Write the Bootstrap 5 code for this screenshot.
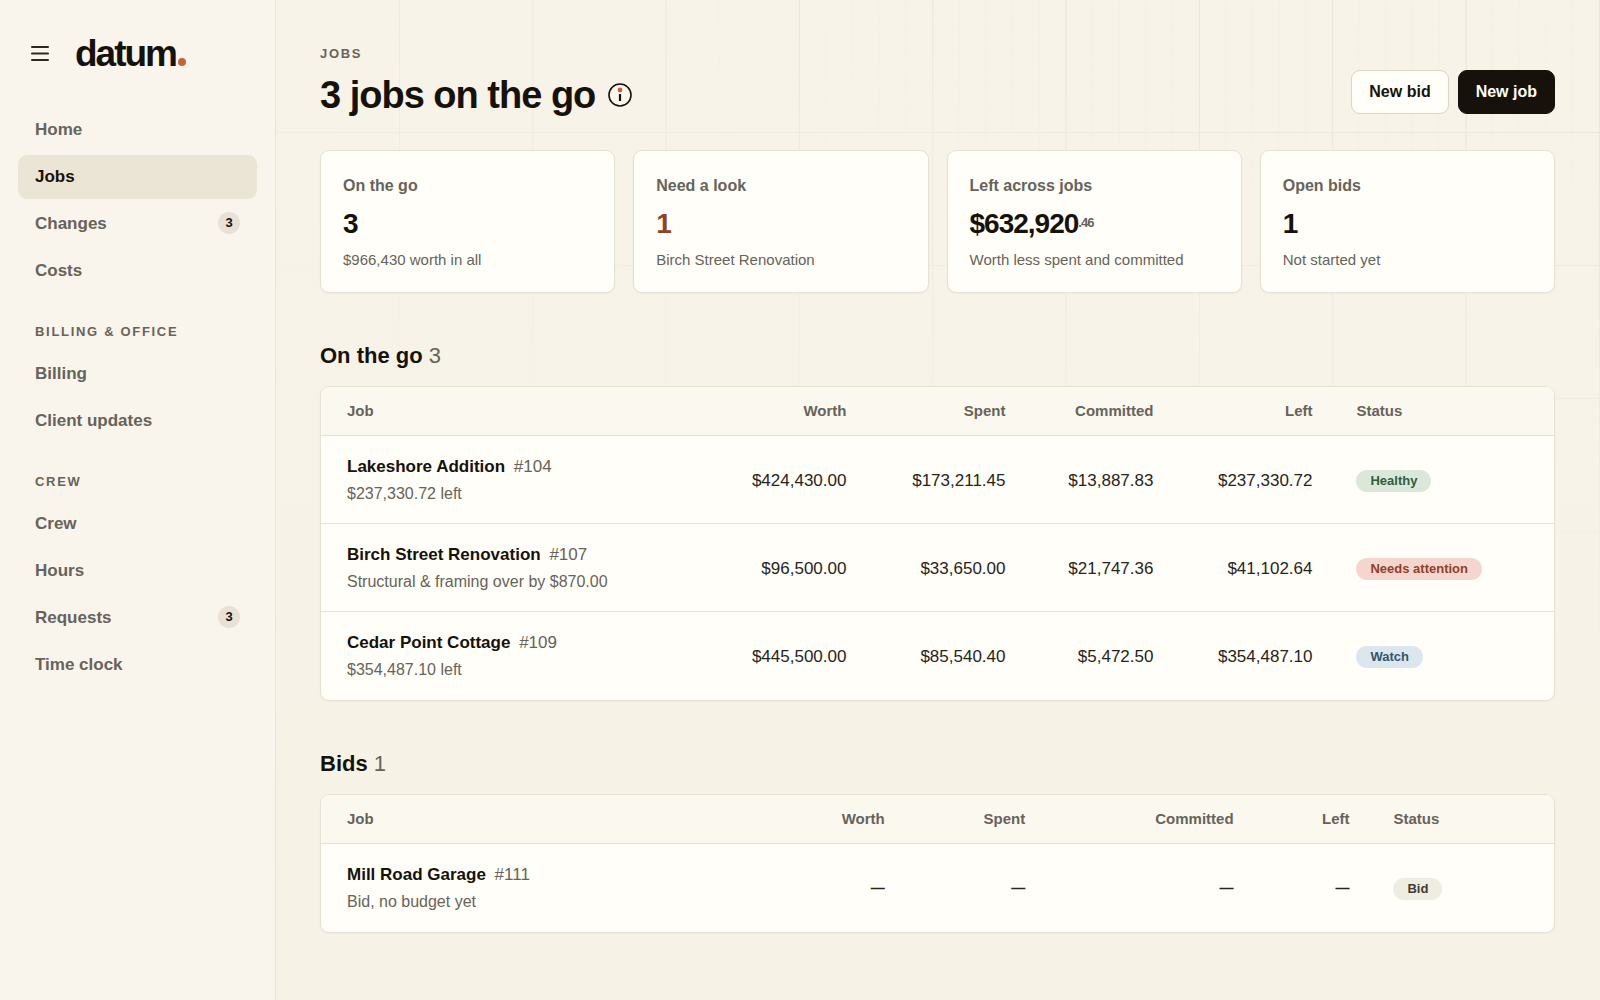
<!DOCTYPE html>
<html lang="en">
<head>
<meta charset="utf-8">
<meta name="viewport" content="width=device-width, initial-scale=1">
<title>Jobs – datum</title>
<link href="https://cdn.jsdelivr.net/npm/bootstrap@5.3.0/dist/css/bootstrap.min.css" rel="stylesheet">
<style>
  :root {
    --ink: #16120b;
    --soft: #67635a;
    --rule: #e7e1d3;
    --paper: #fffef8;
    --rust: #c4623c;
  }
  body {
    font-family: "Liberation Sans", Arial, sans-serif;
    background: #f7f3e9;
    color: var(--ink);
    font-size: 17px;
  }
  .shell { min-height: 100vh; }

  /* Sidebar */
  .sidebar {
    width: 276px;
    background: #f9f5ed;
    border-right: 1px solid #e9e4d7;
    padding: 35px 18px 24px;
  }
  .brand-row { margin-bottom: 35px; }
  .menu-btn { width: 44px; height: 36px; border: 0; background: none; padding: 0 0 0 12px; text-align: left; }
  .menu-btn svg { display: block; }
  .wordmark { font-size: 37px; line-height: 38px; font-weight: 700; letter-spacing: -2px; color: var(--ink); text-decoration: none; margin-left: 13px; }
  .wordmark:hover { color: var(--ink); }
  .wordmark-dot { width: 8px; height: 8px; border-radius: 50%; background: var(--rust); margin: 0 0 7px 2px; }
  .side-nav { gap: 3px; }
  .side-nav .nav-link {
    height: 44px; padding: 0 17px; border-radius: 9px;
    color: var(--soft); font-weight: 700;
  }
  .side-nav .nav-link.active { background: #ebe5d6; color: var(--ink); }
  .tally {
    min-width: 22px; height: 22px; border-radius: 11px; background: #e9e1d5;
    color: var(--ink); font-size: 13px; line-height: 22px; text-align: center; font-weight: 700;
    margin-bottom: 2px;
  }
  .caps { font-size: 13px; line-height: 20px; letter-spacing: .13em; font-weight: 700; color: var(--soft); text-transform: uppercase; margin: 0 0 7px; }
  .side-nav + .caps { padding: 0 17px; margin: 29px 0 10px; white-space: nowrap; }

  /* Main */
  .board { position: relative; padding: 44px 45px 60px 44px; min-width: 0; background: linear-gradient(#f7f3e9, #f6f2e6); }
  .drafting {
    position: absolute; top: 0; right: 0; bottom: 0; left: -276px; pointer-events: none;
    background-image:
      linear-gradient(90deg, transparent calc(100% - 1px), #eae6db 0),
      linear-gradient(transparent calc(100% - 1px), #ece8dd 0);
    background-size: calc(100% / 12) 133px;
    -webkit-mask-image: linear-gradient(195deg, #000 10%, rgba(0,0,0,.6) 30%, transparent 48%);
    mask-image: linear-gradient(195deg, #000 10%, rgba(0,0,0,.6) 30%, transparent 48%);
    clip-path: inset(0 0 0 276px);
  }
  .drafting-fine {
    background-image:
      linear-gradient(90deg, transparent calc(100% - 1px), #f3efe5 0),
      linear-gradient(transparent calc(100% - 1px), #f5f1e7 0);
    background-size: calc(100% / 60) 27px;
    -webkit-mask-image: radial-gradient(ellipse 40% 26% at 78% 0, #000 30%, transparent);
    mask-image: radial-gradient(ellipse 40% 26% at 78% 0, #000 30%, transparent);
  }
  .layer { position: relative; }
  .page-title { font-size: 38px; line-height: 48px; font-weight: 700; letter-spacing: -1px; margin: 0; }
  .title-line { gap: 13px; }
  .info-btn { border: 0; background: none; padding: 0; width: 24px; height: 24px; }
  .info-btn svg { display: block; }
  .btn-datum {
    height: 44px; padding: 0 17px; font-size: 16px; font-weight: 700; border-radius: 9px;
    --bs-btn-border-color: #ddd4c6; --bs-btn-bg: var(--paper); --bs-btn-color: var(--ink);
    --bs-btn-hover-bg: #faf6ec; --bs-btn-hover-border-color: #d3cabb;
  }
  .btn-datum-dark {
    --bs-btn-border-color: var(--ink); --bs-btn-bg: var(--ink); --bs-btn-color: #fffef8;
    --bs-btn-hover-bg: #2d2820; --bs-btn-hover-color: #fffef8;
  }
  .title-bar { margin-bottom: 31px; }
  .title-actions { gap: 9px; margin-bottom: 5px; }

  .stats { --bs-gutter-x: 18px; --bs-gutter-y: 18px; }
  .stat {
    background: var(--paper); border: 1px solid var(--rule); border-radius: 9px;
    padding: 24px 22px 21px; box-shadow: 0 1px 2px rgba(80,60,20,.04);
  }
  .stat-name { font-size: 16px; line-height: 22px; font-weight: 700; color: var(--soft); margin: 0; }
  .stat-figure { font-size: 28px; line-height: 32px; font-weight: 700; letter-spacing: -1px; margin: 11px 0 9px; }
  .stat-figure.alerting { color: #8c4427; }
  .cents { font-size: 13px; color: var(--soft); line-height: 0; vertical-align: 6px; }
  .stat-note { font-size: 15px; line-height: 22px; color: var(--soft); margin: 0; }

  .section-title { font-size: 22px; line-height: 30px; font-weight: 700; margin: 48px 0 15px; }
  .section-title span { font-weight: 400; color: var(--soft); }

  .sheet { background: var(--paper); border: 1px solid var(--rule); border-radius: 9px; overflow: hidden; box-shadow: 0 1px 2px rgba(80,60,20,.04); }
  .sheet table { table-layout: fixed; margin: 0; --bs-table-bg: transparent; min-width: 900px; }
  .sheet th, .sheet td { border-bottom: 1px solid var(--rule); }
  .sheet thead th { background: #fbf8f0; color: var(--soft); font-size: 15px; line-height: 22px; padding: 13px 22px; }
  .sheet tbody td, .sheet tbody th { padding: 17px 22px 16px; color: #27241e; line-height: 27px; font-weight: 400; }
  .sheet tr > :first-child { padding-left: 26px; }
  .sheet tbody tr:last-child > * { border-bottom: 0; padding-bottom: 17px; }
  .job-link { color: var(--ink); font-weight: 700; text-decoration: none; margin-right: 4px; }
  .quiet { color: var(--soft); }
  .job-note { font-size: 16px; line-height: 27px; color: var(--soft); }
  .sheet .blank { font-size: 14px; font-weight: 700; }
  .pill { display: inline-block; font-size: 13px; line-height: 22px; font-weight: 700; border-radius: 11px; padding: 0 14px; vertical-align: middle; }
  .pill-ok { background: #dbe8d9; color: #2f5d43; }
  .pill-bad { background: #f4d6cf; color: #913f28; }
  .pill-watch { background: #dbe6ef; color: #33556f; }
  .pill-bid { background: #efece1; color: #3f3b32; }
</style>
<script src="https://cdn.jsdelivr.net/npm/bootstrap@5.3.0/dist/js/bootstrap.bundle.min.js" defer></script>
</head>
<body>
<div class="shell d-flex">

  <aside class="sidebar flex-shrink-0">
    <div class="brand-row d-flex align-items-center">
      <button class="menu-btn" type="button" aria-label="Toggle menu">
        <svg width="20" height="16" viewBox="0 0 20 16" fill="none" stroke="#2c2820" stroke-width="2" stroke-linecap="round"><path d="M2 1h16M2 7.5h16M2 14h16"/></svg>
      </button>
      <a class="wordmark d-flex align-items-end" href="#"><span>datum</span><span class="wordmark-dot"></span></a>
    </div>

    <nav class="side-nav nav flex-column" aria-label="Main">
      <a class="nav-link d-flex align-items-center" href="#">Home</a>
      <a class="nav-link d-flex align-items-center active" aria-current="page" href="#">Jobs</a>
      <a class="nav-link d-flex align-items-center justify-content-between" href="#">Changes <span class="tally">3</span></a>
      <a class="nav-link d-flex align-items-center" href="#">Costs</a>
    </nav>
    <h2 class="caps">Billing &amp; office</h2>
    <nav class="side-nav nav flex-column" aria-label="Billing and office">
      <a class="nav-link d-flex align-items-center" href="#">Billing</a>
      <a class="nav-link d-flex align-items-center" href="#">Client updates</a>
    </nav>
    <h2 class="caps">Crew</h2>
    <nav class="side-nav nav flex-column" aria-label="Crew">
      <a class="nav-link d-flex align-items-center" href="#">Crew</a>
      <a class="nav-link d-flex align-items-center" href="#">Hours</a>
      <a class="nav-link d-flex align-items-center justify-content-between" href="#">Requests <span class="tally">3</span></a>
      <a class="nav-link d-flex align-items-center" href="#">Time clock</a>
    </nav>
  </aside>

  <main class="board flex-grow-1">
    <div class="drafting drafting-fine"></div>
    <div class="drafting"></div>
    <div class="layer">
      <header class="title-bar d-flex flex-wrap justify-content-between align-items-end">
        <div>
          <p class="caps">Jobs</p>
          <div class="title-line d-flex align-items-center">
            <h1 class="page-title">3 jobs on the go</h1>
            <button class="info-btn" type="button" aria-label="About this page">
              <svg width="24" height="24" viewBox="0 0 24 24"><circle cx="12" cy="12" r="11" fill="#fbf8ef" stroke="#16120b" stroke-width="1.6"/><circle cx="12" cy="7" r="2.4" fill="#cf5b45"/><path d="M12 11v7" stroke="#16120b" stroke-width="2.2"/></svg>
            </button>
          </div>
        </div>
        <div class="title-actions d-flex">
          <button class="btn btn-datum" type="button">New bid</button>
          <button class="btn btn-datum btn-datum-dark" type="button">New job</button>
        </div>
      </header>

      <section class="stats row row-cols-1 row-cols-md-2 row-cols-xl-4" aria-label="Summary">
        <div class="col"><div class="stat h-100">
          <p class="stat-name">On the go</p><p class="stat-figure">3</p><p class="stat-note">$966,430 worth in all</p>
        </div></div>
        <div class="col"><div class="stat h-100">
          <p class="stat-name">Need a look</p><p class="stat-figure alerting">1</p><p class="stat-note">Birch Street Renovation</p>
        </div></div>
        <div class="col"><div class="stat h-100">
          <p class="stat-name">Left across jobs</p><p class="stat-figure">$632,920<span class="cents">.46</span></p><p class="stat-note">Worth less spent and committed</p>
        </div></div>
        <div class="col"><div class="stat h-100">
          <p class="stat-name">Open bids</p><p class="stat-figure">1</p><p class="stat-note">Not started yet</p>
        </div></div>
      </section>

      <h2 class="section-title">On the go <span>3</span></h2>
      <div class="sheet"><div class="table-responsive">
        <table class="table align-middle">
          <colgroup><col style="width:31.4%"><col style="width:13%"><col style="width:12.9%"><col style="width:12%"><col style="width:12.9%"><col style="width:17.8%"></colgroup>
          <thead><tr><th scope="col">Job</th><th scope="col" class="text-end">Worth</th><th scope="col" class="text-end">Spent</th><th scope="col" class="text-end">Committed</th><th scope="col" class="text-end">Left</th><th scope="col">Status</th></tr></thead>
          <tbody>
            <tr><th scope="row"><a class="job-link" href="#">Lakeshore Addition</a> <span class="quiet">#104</span><div class="job-note">$237,330.72 left</div></th><td class="text-end">$424,430.00</td><td class="text-end">$173,211.45</td><td class="text-end">$13,887.83</td><td class="text-end">$237,330.72</td><td><span class="pill pill-ok">Healthy</span></td></tr>
            <tr><th scope="row"><a class="job-link" href="#">Birch Street Renovation</a> <span class="quiet">#107</span><div class="job-note">Structural &amp; framing over by $870.00</div></th><td class="text-end">$96,500.00</td><td class="text-end">$33,650.00</td><td class="text-end">$21,747.36</td><td class="text-end">$41,102.64</td><td><span class="pill pill-bad">Needs attention</span></td></tr>
            <tr><th scope="row"><a class="job-link" href="#">Cedar Point Cottage</a> <span class="quiet">#109</span><div class="job-note">$354,487.10 left</div></th><td class="text-end">$445,500.00</td><td class="text-end">$85,540.40</td><td class="text-end">$5,472.50</td><td class="text-end">$354,487.10</td><td><span class="pill pill-watch">Watch</span></td></tr>
          </tbody>
        </table>
      </div></div>

      <h2 class="section-title">Bids <span>1</span></h2>
      <div class="sheet"><div class="table-responsive">
        <table class="table align-middle">
          <colgroup><col style="width:35%"><col style="width:12.5%"><col style="width:11.4%"><col style="width:16.9%"><col style="width:9.4%"><col style="width:14.8%"></colgroup>
          <thead><tr><th scope="col">Job</th><th scope="col" class="text-end">Worth</th><th scope="col" class="text-end">Spent</th><th scope="col" class="text-end">Committed</th><th scope="col" class="text-end">Left</th><th scope="col">Status</th></tr></thead>
          <tbody>
            <tr><th scope="row"><a class="job-link" href="#">Mill Road Garage</a> <span class="quiet">#111</span><div class="job-note">Bid, no budget yet</div></th><td class="text-end blank">—</td><td class="text-end blank">—</td><td class="text-end blank">—</td><td class="text-end blank">—</td><td><span class="pill pill-bid">Bid</span></td></tr>
          </tbody>
        </table>
      </div></div>
    </div>
  </main>
</div>
</body>
</html>
